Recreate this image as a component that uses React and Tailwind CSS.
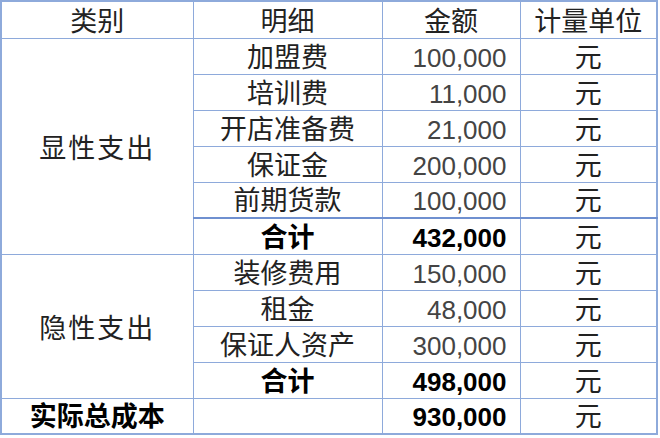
import React from 'react';

const rows = [
    { cat: '显性支出', span: 6, item: '加盟费', amount: '100,000' },
    { item: '培训费', amount: '11,000' },
    { item: '开店准备费', amount: '21,000' },
    { item: '保证金', amount: '200,000' },
    { item: '前期货款', amount: '100,000', thick: true },
    { item: '合计', amount: '432,000', bold: true },
    { cat: '隐性支出', span: 4, item: '装修费用', amount: '150,000' },
    { item: '租金', amount: '48,000' },
    { item: '保证人资产', amount: '300,000' },
    { item: '合计', amount: '498,000', bold: true },
];

const cell = 'border border-[#8eaadb] p-0 align-bottom';

const App = () => {
    return (
        <main
            className="w-[660px] h-[438px] bg-white text-[#222]"
            style={{ fontFamily: '"Liberation Sans", "Noto Sans CJK SC", sans-serif' }}
        >
            <table className="border-collapse table-fixed border-2 border-[#8eaadb]">
                <colgroup>
                    <col className="w-[192px]" />
                    <col className="w-[189px]" />
                    <col className="w-[138px]" />
                    <col className="w-[137px]" />
                </colgroup>
                <thead>
                    <tr className="h-[37px] text-[27px] leading-[31px]">
                        <th className={`${cell} font-normal`}>类别</th>
                        <th className={`${cell} font-normal`}>明细</th>
                        <th className={`${cell} font-normal`}>金额</th>
                        <th className={`${cell} font-normal`}>计量单位</th>
                    </tr>
                </thead>
                <tbody>
                    {rows.map((r, i) => (
                        <tr key={i} className="h-[36px] text-[27px] leading-[31px]">
                            {r.cat && (
                                <td rowSpan={r.span} className={`${cell} !align-middle text-center tracking-[2px] pt-[6px]`}>
                                    {r.cat}
                                </td>
                            )}
                            <td
                                className={`${cell} text-center ${r.bold ? 'font-bold text-black' : ''} ${
                                    r.thick ? 'border-b-2 border-b-[#6f90d0]' : ''
                                }`}
                            >
                                {r.item}
                            </td>
                            <td
                                className={`${cell} text-right pr-[13px] text-[26px] ${
                                    r.bold ? 'font-bold text-black' : 'text-[#444]'
                                } ${r.thick ? 'border-b-2 border-b-[#6f90d0]' : ''}`}
                            >
                                {r.amount}
                            </td>
                            <td
                                className={`${cell} text-center ${r.thick ? 'border-b-2 border-b-[#6f90d0]' : ''}`}
                            >
                                元
                            </td>
                        </tr>
                    ))}
                    <tr className="h-[36px] text-[27px] leading-[31px]">
                        <td className={`${cell} text-center font-bold text-black`}>实际总成本</td>
                        <td className={cell}></td>
                        <td className={`${cell} text-right pr-[13px] text-[26px] font-bold text-black`}>930,000</td>
                        <td className={`${cell} text-center`}>元</td>
                    </tr>
                </tbody>
            </table>
        </main>
    );
};

export default App;
